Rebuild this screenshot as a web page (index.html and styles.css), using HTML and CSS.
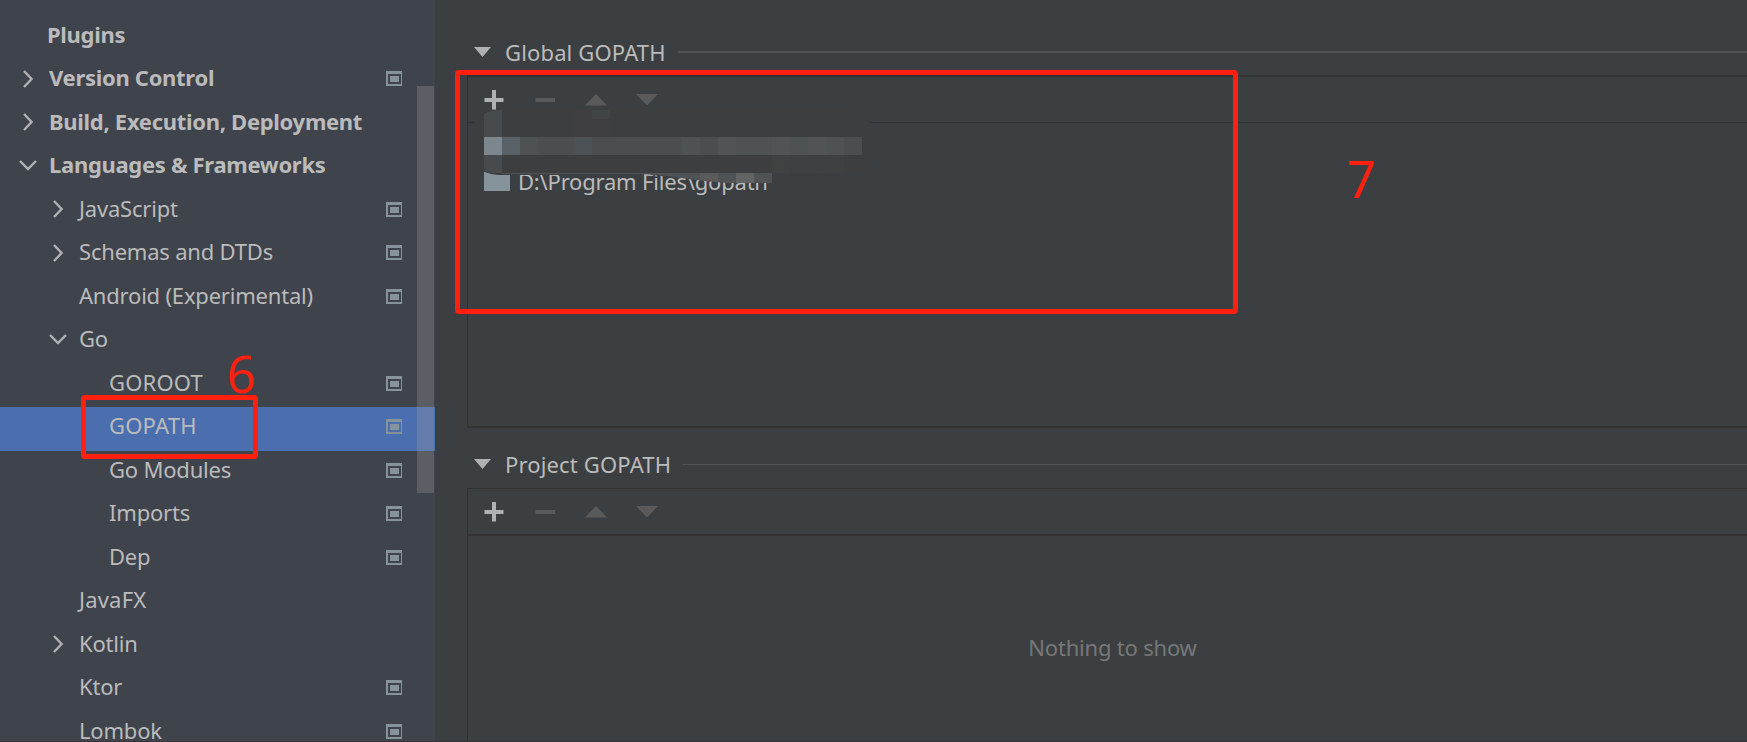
FILE: index.html
```html
<!doctype html>
<html lang="en">
  <head>
    <meta charset="utf-8" />
    <title>Settings - GOPATH</title>
    <link rel="stylesheet" href="styles.css">
  </head>

  <body>
    <!-- shared icons -->
    <svg class="icon_defs">
      <symbol id="right" viewBox="0 0 18 18"><path d="M5 1 L12.6 9 L5 17" /></symbol>
      <symbol id="down" viewBox="0 0 18 18"><path d="M1 4 L9 12 L17 4" /></symbol>
      <symbol id="project" viewBox="0 0 16 15"><path fill-rule="evenodd" d="M0 0H16V15H0Z M2 3V13H15V3Z M4 5H13V11H4Z" /></symbol>
    </svg>

    <div class="settings">
      <div class="sidebar">
        <ul class="tree">
          <li class="bold plugins"><span>Plugins</span></li>
          <li class="bold"><svg class="arrow"><use href="#right" /></svg><span>Version Control</span><svg class="project"><use href="#project" /></svg></li>
          <li class="bold"><svg class="arrow"><use href="#right" /></svg><span>Build, Execution, Deployment</span></li>
          <li class="bold"><svg class="arrow"><use href="#down" /></svg><span>Languages &amp; Frameworks</span></li>
          <li class="level2"><svg class="arrow"><use href="#right" /></svg><span>JavaScript</span><svg class="project"><use href="#project" /></svg></li>
          <li class="level2"><svg class="arrow"><use href="#right" /></svg><span>Schemas and DTDs</span><svg class="project"><use href="#project" /></svg></li>
          <li class="level2 leaf"><span>Android (Experimental)</span><svg class="project"><use href="#project" /></svg></li>
          <li class="level2"><svg class="arrow"><use href="#down" /></svg><span>Go</span></li>
          <li class="level3 caps"><span>GOROOT</span><svg class="project"><use href="#project" /></svg></li>
          <li class="level3 caps selected"><span>GOPATH</span><svg class="project"><use href="#project" /></svg></li>
          <li class="level3"><span>Go Modules</span><svg class="project"><use href="#project" /></svg></li>
          <li class="level3"><span>Imports</span><svg class="project"><use href="#project" /></svg></li>
          <li class="level3"><span>Dep</span><svg class="project"><use href="#project" /></svg></li>
          <li class="level2 leaf caps"><span>JavaFX</span></li>
          <li class="level2"><svg class="arrow"><use href="#right" /></svg><span>Kotlin</span></li>
          <li class="level2 leaf"><span>Ktor</span><svg class="project"><use href="#project" /></svg></li>
          <li class="level2 leaf"><span>Lombok</span><svg class="project"><use href="#project" /></svg></li>
        </ul>
        <div class="scrollbar"></div>
      </div>

      <div class="content">
        <div class="section_title global_title">
          <svg class="collapse" viewBox="0 0 17 10"><path d="M0 0H17L8.5 10Z" /></svg>
          <h2>Global GOPATH</h2>
          <hr>
        </div>
        <div class="panel global_panel">
          <div class="toolbar">
            <svg viewBox="0 0 172 20">
              <path class="enabled" d="M8 0H12V8H19.5V12H12V19.5H8V12H0.500V8H8Z" />
              <path d="M51.500 8H71V12H51.500Z M101 15.500L112 4L123 15.500Z M152 4H174L163 15.500Z" />
            </svg>
          </div>
          <div class="path_list">
            <div class="path">
              <svg class="folder" viewBox="0 0 26 20"><path d="M0 0H26V20H0Z" /></svg>
              <span>D:\Program Files\gopath</span>
            </div>
          </div>
          <!-- mosaic over the first path -->
          <svg class="mosaic" viewBox="0 0 420 90">
            <path fill="#3c3e40" d="M0 37Q0 0 34 0H380Q414 15 414 30Q414 60 380 64L222 67L190 66Q170 60 155 65H30Q0 62 0 37Z" />
            <path fill="#484b4d" d="M16 4Q22 0 34 0V27H16Z M16 45H34V63H24Q20 63 16 60Z" />
            <path fill="#3f3f41" d="M106 0H142V27H106Z" />
            <path fill="#424545" d="M124 0H142V9H124Z" />
            <path fill="#404242" d="M304 45H322V63H304Z" />
            <path fill="#3e4142" d="M322 45H376V63H322Z" />
            <path fill="#7c878d" d="M16 27H34V45H16Z" />
            <path fill="#586165" d="M34 27H52V45H34Z" />
            <path fill="#4b4d4e" d="M52 27H394V45H52Z" />
            <path fill="#4e5252" d="M52 27H70V45H52Z M214 27H232V45H214Z M268 27H304V45H268Z M322 27H340V45H322Z M358 27H376V45H358Z" />
            <path fill="#4c5256" d="M106 27H124V45H106Z" />
            <path fill="#525355" d="M250 27H268V45H250Z M304 27H322V45H304Z M340 27H358V45H340Z" />
            <path fill="#505355" d="M34 63H304V73H260Q232 71 214 68Q190 64 160 64H34Z" />
            <path fill="#5a5a5b" d="M232 63H250V71.500L232 70Z" />
            <path fill="#626363" d="M268 63H286V73H268Z" />
          </svg>
        </div>
        <div class="section_title project_title">
          <svg class="collapse" viewBox="0 0 17 10"><path d="M0 0H17L8.500 10Z" /></svg>
          <h2>Project GOPATH</h2>
          <hr>
        </div>
        <div class="panel project_panel">
          <div class="toolbar">
            <svg viewBox="0 0 172 20">
              <path class="enabled" d="M8 0H12V8H19.5V12H12V19.5H8V12H0.500V8H8Z" />
              <path d="M51.500 8H71V12H51.500Z M101 15.500L112 4L123 15.500Z M152 4H174L163 15.500Z" />
            </svg>
          </div>
          <div class="empty"><span>Nothing to show</span></div>
        </div>
      </div>

      <!-- red step marks -->
      <div class="mark mark_menu"></div>
      <div class="mark mark_path"></div>
      <div class="step step6">6</div>
      <div class="step step7">7</div>
    </div>
  </body>
</html>
```

FILE: styles.css
```css
/* Set CSS for whole page */
body{
  margin: 0;
  font-family: "Noto Sans", "Open Sans", sans-serif;
  font-size: 22px;
  letter-spacing: -0.2px;
  color: #bbbbbb;
  background-color: #3c3f41;
  overflow: hidden;
}
.icon_defs{
  display: none;
}
.settings{
  position: relative;
  display: flex;
  box-sizing: border-box;
  width: 1747px;
  height: 742px;
  border-bottom: 1px solid #39343c;
  overflow: hidden;
}
/* Left tree */
.sidebar{
  position: relative;
  flex: none;
  width: 435px;
  background-color: #3f434c;
}
.tree{
  margin: 0;
  padding: 15.5px 0 0;
  list-style: none;
}
.tree li{
  display: flex;
  align-items: center;
  box-sizing: border-box;
  height: 43.5px;
  padding-left: 19px;
  padding-right: 33px;
  padding-bottom: 4.5px;
  white-space: nowrap;
}
.tree span{
  padding-bottom: 2.5px;
}
.tree .plugins{
  padding-left: 47px;
}
.tree .level2{
  padding-left: 49px;
}
.tree .leaf{
  padding-left: 79px;
}
.tree .level3{
  padding-left: 109px;
}
.tree .bold{
  font-weight: 700;
  letter-spacing: -0.3px;
}
.tree .caps{
  letter-spacing: 0.2px;
}
.tree .selected{
  background-color: #4b6eaf;
}
.arrow{
  width: 18px;
  height: 18px;
  margin-right: 12px;
  fill: none;
  stroke: #afb1b3;
  stroke-width: 2.4;
}
.project{
  width: 16px;
  height: 15px;
  margin-left: auto;
  fill: #87939a;
}
.scrollbar{
  position: absolute;
  left: 417px;
  top: 86px;
  width: 17px;
  height: 407px;
  background-color: rgba(166, 166, 166, 0.28);
}
/* Right side */
.content{
  flex: 1;
  display: flex;
  flex-direction: column;
  padding-left: 32px;
}
.section_title{
  display: flex;
  align-items: center;
  flex: none;
  height: 40px;
  padding-left: 7px;
}
.global_title{
  margin-top: 32px;
}
.project_title{
  margin-top: 16px;
}
.collapse{
  width: 17px;
  height: 10px;
  margin-right: 14px;
  fill: #afb1b3;
}
h2{
  margin: 0;
  font-size: 22px;
  font-weight: 400;
  letter-spacing: 0.15px;
}
hr{
  flex: 1;
  height: 1px;
  margin: 0 0 0 12px;
  border: 0;
  background-color: #515355;
}
.global_title hr{
  height: 2px;
}
.panel{
  position: relative;
  box-sizing: border-box;
  border: 1px solid #323232;
  border-right: 0;
}
.global_panel{
  flex: none;
  height: 353px;
  margin-top: 3px;
  border-top-width: 2px;
  border-bottom-width: 2px;
}
.project_panel{
  display: flex;
  flex-direction: column;
  flex: 1;
  margin-top: 4px;
  border-bottom: 0;
}
.toolbar{
  height: 45px;
  display: flex;
  align-items: center;
  padding-left: 16px;
  border-bottom: 1px solid #323232;
}
.project_panel .toolbar{
  border-bottom-width: 2px;
}
.toolbar svg{
  width: 172px;
  height: 20px;
  overflow: visible;
  fill: #5a5a5a;
}
.toolbar .enabled{
  fill: #afb1b3;
}
.path_list{
  padding: 41px 0 0 16px;
}
.path{
  display: flex;
  align-items: center;
  height: 34px;
}
.folder{
  width: 26px;
  height: 20px;
  margin-right: 8px;
  fill: #87939a;
}
.mosaic{
  position: absolute;
  left: 0;
  top: 33px;
  width: 420px;
  height: 90px;
}
.empty{
  flex: 1;
  display: flex;
  justify-content: center;
  padding-top: 96px;
  padding-left: 10px;
  color: #777777;
}
/* Red boxes and numbers over the page */
.mark{
  position: absolute;
  box-sizing: border-box;
  border: 5px solid #ff2010;
  border-radius: 4px;
}
.mark_menu{
  left: 81px;
  top: 395px;
  width: 177px;
  height: 64px;
}
.mark_path{
  left: 455px;
  top: 70px;
  width: 783px;
  height: 244px;
}
.step{
  position: absolute;
  font-size: 51px;
  line-height: 60px;
  color: #ff2010;
}
.step6{
  left: 227px;
  top: 343px;
}
.step7{
  left: 1347px;
  top: 148px;
}
```
